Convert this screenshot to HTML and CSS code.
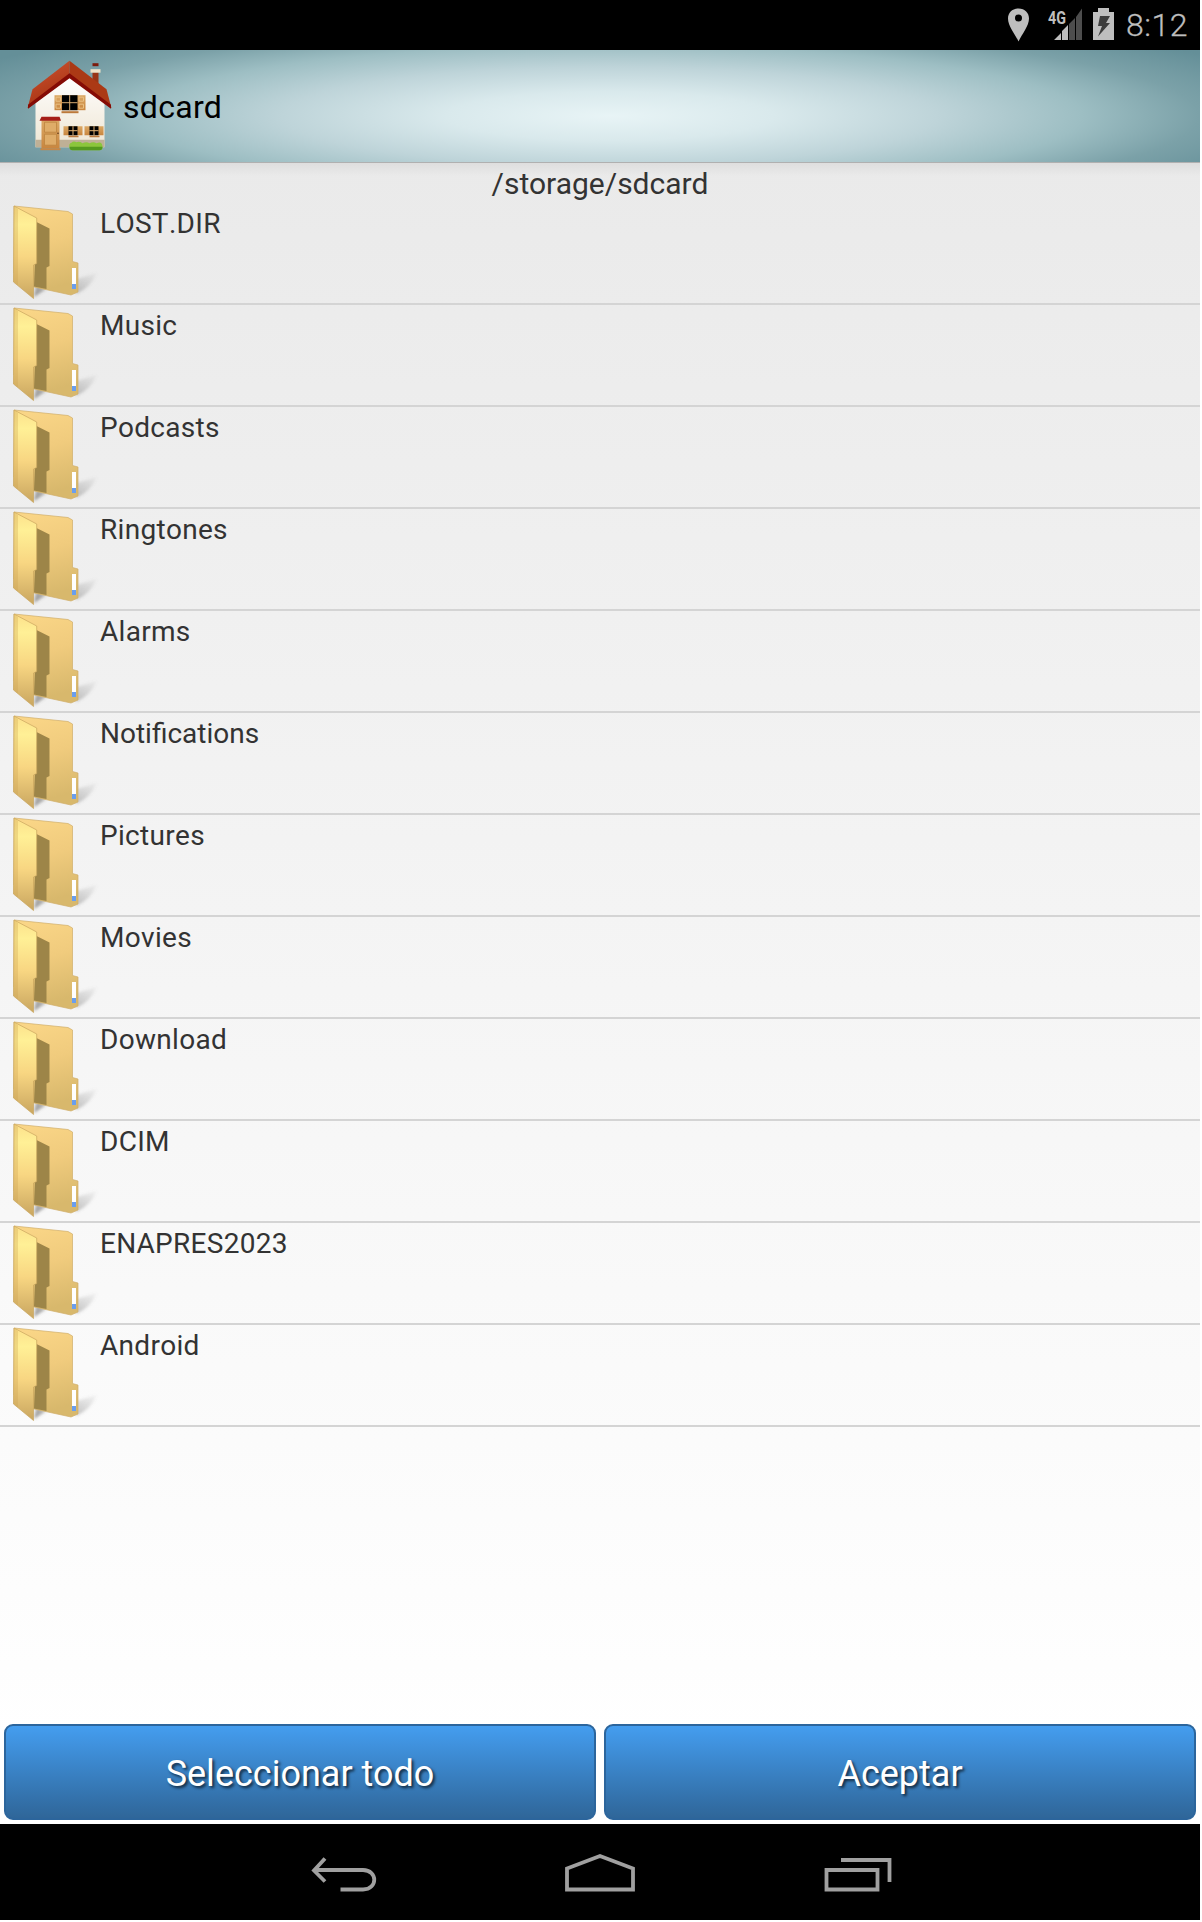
FILE: index.html
```
<!DOCTYPE html>
<html lang="es">
<head>
<meta charset="utf-8">
<title>sdcard</title>
<link rel="stylesheet" href="styles.css">
</head>
<body>
<svg class="defs" width="0" height="0" aria-hidden="true">
  <defs>
    <linearGradient id="flap" x1="0" y1="0" x2="0" y2="1"><stop offset="0" stop-color="#fce08b"/><stop offset=".2" stop-color="#fff096"/><stop offset=".55" stop-color="#f8d682"/><stop offset="1" stop-color="#c9a660"/></linearGradient>
    <linearGradient id="back" x1="0" y1="0" x2=".2" y2="1"><stop offset="0" stop-color="#fbd788"/><stop offset=".5" stop-color="#f0cb7d"/><stop offset="1" stop-color="#d8b86c"/></linearGradient>
    <linearGradient id="cast" x1="0" y1="1" x2="1" y2="0"><stop offset="0" stop-color="#555" stop-opacity=".6"/><stop offset="1" stop-color="#777" stop-opacity=".05"/></linearGradient>
    <filter id="soft" x="-30%" y="-30%" width="160%" height="160%"><feGaussianBlur stdDeviation="1.6"/></filter>
    <symbol id="folder" viewBox="0 0 100 100">
      <path d="M76 76L97 70Q90 85 76 91ZM34 94L46 86L36 82Z" fill="url(#cast)" filter="url(#soft)"/>
      <path d="M14 3L68 8.500L72.500 11V58.500L78 60V89L71 92L34 84L14 70Z" fill="url(#back)" stroke="#d0ae68" stroke-width=".7"/>
      <path d="M36.500 19L49.500 25.500V63L46.500 64.500V86L34 83.500Z" fill="#9d8548"/>
      <rect x="72" y="65" width="4" height="16" fill="#fff"/><rect x="72" y="81" width="4" height="5" fill="#6a9eed"/>
      <path d="M14 3L36.700 15V60.500L33.500 62V95.500L13.500 79Z" fill="url(#flap)" stroke="#c8a55d" stroke-width=".7"/>
      <path d="M14 3L18 6V82L13.500 79Z" fill="#c9a050" opacity=".3"/>
    </symbol>
  </defs>
</svg>
<div class="screen">
  <div class="status">
    <svg class="status-icons" width="114" height="50" viewBox="0 0 114 50">
      <path fill="#bebebe" fill-rule="evenodd" d="M12.500 8.500C6 8.500 2 13 2 18.500C2 26 9 34 12.500 41.500C16 34 23 26 23 18.500C23 13 19 8.500 12.500 8.500ZM12.500 14.500A3.500 3.500 0 1 1 12.500 21.500A3.500 3.500 0 1 1 12.500 14.500Z"/>
      <path fill="#bebebe" d="M48 40L55 33V40ZM56 31L62 25V40H56Z"/>
      <path fill="#4d4d4d" d="M63 24L69 18V40H63ZM70 17L76 8.500V40H70Z"/>
      <path fill="#bebebe" d="M87 12H92V8H103V12H108V40H87Z"/>
      <path fill="#3c3c3c" d="M94 16H104L100 23H104L92 36.500L96 26H92Z"/>
      <text class="net" x="42" y="23.500" textLength="18" lengthAdjust="spacingAndGlyphs">4G</text>
    </svg>
    <span class="clock">8:12</span>
  </div>
  <header class="bar">
    <svg class="house" width="88" height="96" viewBox="0.5 -1.2 88 96">
      <defs>
        <linearGradient id="wall" x1="0" y1="0" x2="0" y2="1"><stop offset="0" stop-color="#fff"/><stop offset="1" stop-color="#eee5d3"/></linearGradient>
        <linearGradient id="roofl" x1="0" y1="0" x2=".4" y2="1"><stop offset="0" stop-color="#cf5533"/><stop offset="1" stop-color="#a63212"/></linearGradient>
        <linearGradient id="wood" x1="0" y1="0" x2="0" y2="1"><stop offset="0" stop-color="#dba865"/><stop offset="1" stop-color="#c9863f"/></linearGradient>
      </defs>
      <path d="M9 44L43 15L78 44V88H9Z" fill="url(#wall)"/>
      <path d="M9 80.500H78V88H9Z" fill="#bfb096"/>
      <path d="M66 13H72V36L66 32Z" fill="#9a3515"/><path d="M64 10H74V13.500H64Z" fill="#f1e4c8"/><path d="M66 4H72V7H66Z" fill="#7c1b0c"/>
      <path d="M43 1.500L6 30L1 49L43 18Z" fill="url(#roofl)"/>
      <path d="M43 1.500L80 30L85 49L43 18Z" fill="#ab3915"/>
      <path d="M43 14L1.500 45.500V49.500L43 19L84.500 49.500V45.500Z" fill="#850b05"/>
      <g transform="translate(0 1)">
      <path d="M28 35H59V50H28Z" fill="url(#wood)"/><path d="M35.500 35H51V50H35.500Z" fill="#000"/>
      <path d="M43.200 35V50M35.500 42.500H51" stroke="#d8aa70" stroke-width="1"/>
      <path d="M29.500 37H34V41H29.500ZM29.500 44H34V48H29.500ZM52.500 37H57V41H52.500ZM52.500 44H57V48H52.500Z" fill="none" stroke="#e9c083"/>
      <path d="M35 51H52V53H35Z" fill="#bc793b"/>
      <path d="M37 66H56V75H37ZM58 66H77V75H58Z" fill="url(#wood)"/><path d="M42 66H51V75H42ZM63 66H72V75H63Z" fill="#000"/>
      <path d="M46.500 66V75M42 70.500H51M67.500 66V75M63 70.500H72" stroke="#e2b070" stroke-width="1"/>
      <path d="M42 75.500H52V77H42ZM63 75.500H73V77H63Z" fill="#bc793b"/>
      </g>
      <path d="M15 61H33V89H15Z" fill="url(#wood)"/><path d="M18 63H30V73H18ZM18 75H30V86H18Z" fill="#dfac68" stroke="#bd843f" stroke-width=".8"/>
      <circle cx="31.500" cy="74" r=".7" fill="#3b1c09"/>
      <path d="M15 57.500H33L34.500 61.500H13Z" fill="#a51d16"/><path d="M14 89H34V91H14Z" fill="#c88745"/>
      <path d="M43 88Q42 84 45 83.500Q47 81.500 50 83Q53 82 56 84Q60 82 63 84Q67 82 70 84Q76 81.500 76 88Q76 91 73 91H46Q43 91 43 88Z" fill="#8cc63c"/><path d="M43 87.500H76Q76 91 73 91H46Q43 91 43 87.500Z" fill="#55991f"/>
    </svg>
    <h1 class="title">sdcard</h1>
  </header>
  <main class="content">
    <div class="path">/storage/sdcard</div>
    <ul class="list">
      <li><svg class="folder"><use href="#folder"/></svg><span>LOST.DIR</span></li>
      <li><svg class="folder"><use href="#folder"/></svg><span>Music</span></li>
      <li><svg class="folder"><use href="#folder"/></svg><span>Podcasts</span></li>
      <li><svg class="folder"><use href="#folder"/></svg><span>Ringtones</span></li>
      <li><svg class="folder"><use href="#folder"/></svg><span>Alarms</span></li>
      <li><svg class="folder"><use href="#folder"/></svg><span class="ligature">Notifications</span></li>
      <li><svg class="folder"><use href="#folder"/></svg><span>Pictures</span></li>
      <li><svg class="folder"><use href="#folder"/></svg><span>Movies</span></li>
      <li><svg class="folder"><use href="#folder"/></svg><span>Download</span></li>
      <li><svg class="folder"><use href="#folder"/></svg><span>DCIM</span></li>
      <li><svg class="folder"><use href="#folder"/></svg><span>ENAPRES2023</span></li>
      <li><svg class="folder"><use href="#folder"/></svg><span>Android</span></li>
    </ul>
    <div class="actions"><button>Seleccionar todo</button><button>Aceptar</button></div>
  </main>
  <nav class="nav">
    <svg width="640" height="96" viewBox="280 1824 640 96" fill="none" stroke="#a0a0a0" stroke-width="3.800">
      <path d="M325 1858.500L314 1870.500L325 1881.500M314 1870H363C378 1870 378 1889.500 363 1889.500H340.500"/>
      <path d="M567 1889.500V1868.500L600 1856L633 1868.500V1889.500Z"/>
      <path d="M826.500 1870H877.500V1889.500H826.500ZM841 1860H889.500V1882"/>
    </svg>
  </nav>
</div>
</body>
</html>
```
FILE: styles.css
```
* { box-sizing: border-box; }
body { margin: 0; background: #fff; font-family: Roboto, "Noto Sans", sans-serif; color: #333; }
.defs { display: block; height: 0; }
.screen { width: 1200px; height: 1920px; display: flex; flex-direction: column; }
.status { height: 50px; background: #000; display: flex; justify-content: flex-end; align-items: flex-start; padding-right: 12px; }
.status-icons { margin-right: 6px; }
.net { font: 700 18px Roboto, sans-serif; fill: #bebebe; }
.clock { font-size: 32px; line-height: 51px; color: #bebebe; font-weight: 300; letter-spacing: .5px; -webkit-text-stroke: .3px #bebebe; }
.bar { height: 112px; display: flex; align-items: center; padding-left: 27px; background: radial-gradient(ellipse 655px 98px at 610px 66px, #e8f4f6 0%, #d9e9ec 25%, #bed4d9 50%, #9dbec3 72%, #7ba1a8 90%, #648f98 110%); }
.title { margin: 0 0 0 8px; padding-top: 2px; font-size: 32px; font-weight: 400; letter-spacing: .3px; color: #000; }
.content { flex: 1; display: flex; flex-direction: column; background: linear-gradient(#b0b0b0 0 1px, #dedede 1px, rgba(230,230,230,0) 14px), linear-gradient(#eaeaea, #fff 95%); }
.path { height: 41px; line-height: 43px; text-align: center; font-size: 30px; }
.list { list-style: none; margin: 0; padding: 0; }
.list li { height: 102px; border-bottom: 2px solid #d4d4d4; display: flex; }
.folder { width: 100px; height: 100px; }
.list span { font-size: 28px; line-height: 41px; font-kerning: none; letter-spacing: .3px; }
.list .ligature { letter-spacing: 0; }
.actions { margin-top: auto; display: grid; grid-template-columns: 1fr 1fr; gap: 8px; padding: 4px; }
.actions button { height: 96px; padding-top: 5px; border: 2px solid #2c659c; border-radius: 9px; background: linear-gradient(#449def, #2f6699); font: 36px Roboto, sans-serif; color: #fff; text-shadow: 2px 2px 3px #000000b0; }
.nav { height: 96px; background: #000; display: flex; justify-content: center; }
```
